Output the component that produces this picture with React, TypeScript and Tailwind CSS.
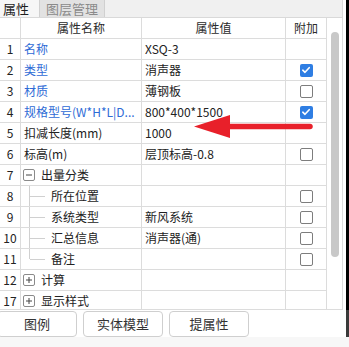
import { Fragment } from "react";

type Row = {
  no: string;
  name: string;
  value?: string;
  blue?: boolean;
  check?: "on" | "off";
  tree?: "minus" | "plus" | "child" | "last";
};

const rows: Row[] = [
  { no: "1", name: "名称", value: "XSQ-3", blue: true },
  { no: "2", name: "类型", value: "消声器", blue: true, check: "on" },
  { no: "3", name: "材质", value: "薄钢板", blue: true, check: "off" },
  { no: "4", name: "规格型号(W*H*L|D...", value: "800*400*1500", blue: true, check: "on" },
  { no: "5", name: "扣减长度(mm)", value: "1000" },
  { no: "6", name: "标高(m)", value: "层顶标高-0.8", check: "off" },
  { no: "7", name: "出量分类", tree: "minus" },
  { no: "8", name: "所在位置", tree: "child", check: "off" },
  { no: "9", name: "系统类型", value: "新风系统", tree: "child", check: "off" },
  { no: "10", name: "汇总信息", value: "消声器(通)", tree: "child", check: "off" },
  { no: "11", name: "备注", tree: "last", check: "off" },
  { no: "12", name: "计算", tree: "plus" },
  { no: "17", name: "显示样式", tree: "plus" },
];

const Box = ({ sign }: { sign: "minus" | "plus" }) => (
  <span className="w-[12px] h-[12px] border border-[#8a8a8a] rounded-[2px] flex items-center justify-center mr-[6px] shrink-0 bg-white">
    <svg width="8" height="8" viewBox="0 0 8 8">
      <path d="M1 4h6" stroke="#444" strokeWidth="1" />
      {sign === "plus" && <path d="M4 1v6" stroke="#444" strokeWidth="1" />}
    </svg>
  </span>
);

const CheckBox = ({ on }: { on: boolean }) =>
  on ? (
    <span className="w-[13px] h-[13px] rounded-[2px] bg-[#2f7ee3] flex items-center justify-center">
      <svg width="10" height="10" viewBox="0 0 10 10">
        <path d="M1.8 5.2l2.2 2.1 4.2-4.6" fill="none" stroke="#fff" strokeWidth="1.6" strokeLinecap="round" strokeLinejoin="round" />
      </svg>
    </span>
  ) : (
    <span className="w-[13px] h-[13px] rounded-[2px] border border-[#7d7d7d] bg-white" />
  );

const NameCell = ({ row }: { row: Row }) => {
  if (row.tree === "minus" || row.tree === "plus") {
    return (
      <div className="flex items-center pl-[2px] text-[#222]">
        <Box sign={row.tree} />
        <span>{row.name}</span>
      </div>
    );
  }
  if (row.tree === "child" || row.tree === "last") {
    return (
      <div className="flex items-center h-full text-[#222]">
        <div className="w-[8px]" />
        <div className="w-[1px] h-full flex flex-col">
          <div className="h-1/2 bg-[#d0d0d0]" />
          <div className={row.tree === "last" ? "h-1/2" : "h-1/2 bg-[#d0d0d0]"} />
        </div>
        <div className="w-[15px] h-[1px] bg-[#d0d0d0]" />
        <span className="pl-[6px]">{row.name}</span>
      </div>
    );
  }
  return (
    <div className={`pl-[3px] whitespace-nowrap leading-[16px] ${row.blue ? "text-[#2e6bd6]" : "text-[#222]"}`}>
      {row.name}
    </div>
  );
};

const App = () => {
  return (
    <div
      className="w-[349px] h-[347px] flex flex-col bg-white overflow-hidden text-[12px] leading-[16px]"
      style={{ fontFamily: '"Noto Sans CJK SC", "Noto Sans", sans-serif' }}
    >
      <div className="flex h-[337px]">
        <div className="w-[343px] flex flex-col">
          {/* tabs */}
          <div className="h-[18px] flex bg-[#f0f0f0] border-b border-r border-[#d9d9d9]">
            <div className="w-[39px] bg-[#f6f6f6] flex items-center pl-[3px] text-[13px] text-[#1e1e1e]">属性</div>
            <div className="w-[66px] bg-[#e2e2e2] border-x border-[#d0d0d0] flex items-center justify-center text-[13px] text-[#8a8a8a]">
              图层管理
            </div>
          </div>

          {/* table */}
          <div className="h-[292px] flex border-b border-r border-[#dcdcdc] overflow-hidden">
            <div className="w-[327px] flex flex-col overflow-hidden">
              <div className="h-[21px] shrink-0 flex border-b border-[#dcdcdc] text-[#2a2a2a]">
                <div className="w-[21px] border-r border-[#dcdcdc]" />
                <div className="w-[121px] border-r border-[#dcdcdc] flex items-center justify-center">属性名称</div>
                <div className="w-[144px] border-r border-[#dcdcdc] flex items-center justify-center">属性值</div>
                <div className="w-[41px] border-r border-[#dcdcdc] flex items-center justify-center">附加</div>
              </div>
              {rows.map((row) => (
                <Fragment key={row.no}>
                  <div className="h-[21px] shrink-0 flex border-b border-[#dcdcdc]">
                    <div className="w-[21px] border-r border-[#dcdcdc] flex items-center justify-center text-[#222]">
                      {row.no}
                    </div>
                    <div className="w-[121px] border-r border-[#dcdcdc] flex flex-col justify-center overflow-hidden">
                      <NameCell row={row} />
                    </div>
                    <div className="w-[144px] border-r border-[#dcdcdc] flex items-center pl-[3px] text-[#222] relative">
                      {row.value}
                      {row.no === "5" && (
                        <svg
                          className="absolute left-[52px] top-[-10px]"
                          width="120"
                          height="26"
                          viewBox="0 0 120 26"
                        >
                          <path d="M36 13.5H116" stroke="#e8202a" strokeWidth="5.5" strokeLinecap="round" />
                          <path d="M0 13.5L36 2V25Z" fill="#e8202a" />
                        </svg>
                      )}
                    </div>
                    <div className="w-[41px] border-r border-[#dcdcdc] flex items-center justify-center">
                      {row.check && <CheckBox on={row.check === "on"} />}
                    </div>
                  </div>
                </Fragment>
              ))}
            </div>
            {/* scrollbar */}
            <div className="w-[15px] pl-[4px] pt-[14px]">
              <div className="w-[8px] h-[225px] rounded-full bg-[#c8c8c8]" />
            </div>
          </div>

          {/* buttons */}
          <div className="flex gap-[6px] pt-[1px] -ml-[3px]">
            {["图例", "实体模型", "提属性"].map((label) => (
              <button
                key={label}
                className="w-[80px] h-[26px] border border-[#cfcfcf] rounded-[4px] bg-white text-[13px] text-[#333] flex items-center justify-center"
              >
                {label}
              </button>
            ))}
          </div>
        </div>
        <div className="w-[3px]" />
        <div className="w-[3px] flex flex-col">
          <div className="flex-1 bg-black" />
          <div className="h-[27px] bg-[#3a3a3a]" />
        </div>
      </div>
      <div className="flex-1 bg-[#f7f7f7]" />
    </div>
  );
};

export default App;
